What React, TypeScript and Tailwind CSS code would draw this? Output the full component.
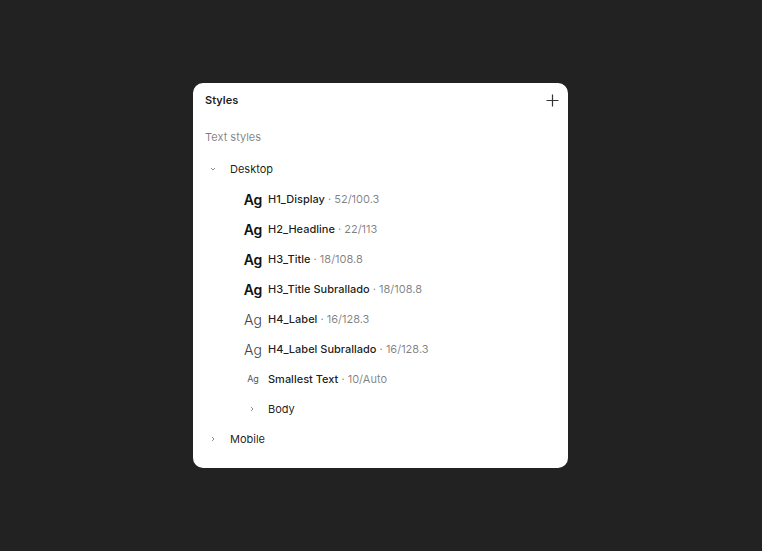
import React from 'react';

const font = { fontFamily: 'Inter, "Noto Sans", sans-serif' };

type Style = { name: string; meta: string; kind: 'bold' | 'light' | 'small' };

const STYLES: Style[] = [
  { name: 'H1_Display', meta: '52/100.3', kind: 'bold' },
  { name: 'H2_Headline', meta: '22/113', kind: 'bold' },
  { name: 'H3_Title', meta: '18/108.8', kind: 'bold' },
  { name: 'H3_Title Subrallado', meta: '18/108.8', kind: 'bold' },
  { name: 'H4_Label', meta: '16/128.3', kind: 'light' },
  { name: 'H4_Label Subrallado', meta: '16/128.3', kind: 'light' },
  { name: 'Smallest Text', meta: '10/Auto', kind: 'small' },
];

function Chevron({ down }: { down?: boolean }) {
  return (
    <svg width="16" height="16" viewBox="0 0 16 16" fill="none" stroke="#8c8c8c" strokeWidth="1">
      {down ? <path d="M6 7l2 2 2-2" /> : <path d="M7 6l2 2-2 2" />}
    </svg>
  );
}

function Ag({ kind }: { kind: Style['kind'] }) {
  if (kind === 'bold') return <span className="text-[14px] font-semibold text-[#111]">Ag</span>;
  if (kind === 'light') return <span className="text-[14px] font-light text-[#444]">Ag</span>;
  return <span className="text-[9px] text-[#555]">Ag</span>;
}

export default function App() {
  return (
    <div className="w-full h-[551px] bg-[#222222] flex items-center pl-[193px]" style={font}>
      <div className="w-[375px] h-[385px] bg-white rounded-[10px] flex flex-col">
        <div className="h-[34px] flex items-center justify-between pl-3 pr-[9px]">
          <span className="text-[11px] font-semibold text-[#000000e5]">Styles</span>
          <svg width="13" height="13" viewBox="0 0 13 13" stroke="#333" strokeWidth="1.2">
            <path d="M6.5 0.5v12M0.5 6.5h12" />
          </svg>
        </div>
        <div className="h-[37px] flex items-center pl-3 pt-1">
          <span className="text-[11px] text-[#00000080]">Text styles</span>
        </div>
        <div className="flex flex-col">
          <div className="h-[30px] flex items-center pl-3">
            <Chevron down />
            <span className="ml-[9px] text-[11px] text-[#000000e5]">Desktop</span>
          </div>
          {STYLES.map((s) => (
            <div key={s.name} className="h-[30px] flex items-center pl-[52px]">
              <div className="w-[16px] flex items-center justify-center mr-[7px]">
                <Ag kind={s.kind} />
              </div>
              <span className="text-[11px] font-medium text-[#000000e5]">{s.name}</span>
              <span className="text-[11px] text-[#00000080] whitespace-pre"> · {s.meta}</span>
            </div>
          ))}
          <div className="h-[30px] flex items-center pl-[51px]">
            <Chevron />
            <span className="ml-2 text-[11px] text-[#000000e5]">Body</span>
          </div>
          <div className="h-[30px] flex items-center pl-3">
            <Chevron />
            <span className="ml-[9px] text-[11px] text-[#000000e5]">Mobile</span>
          </div>
        </div>
      </div>
    </div>
  );
}
